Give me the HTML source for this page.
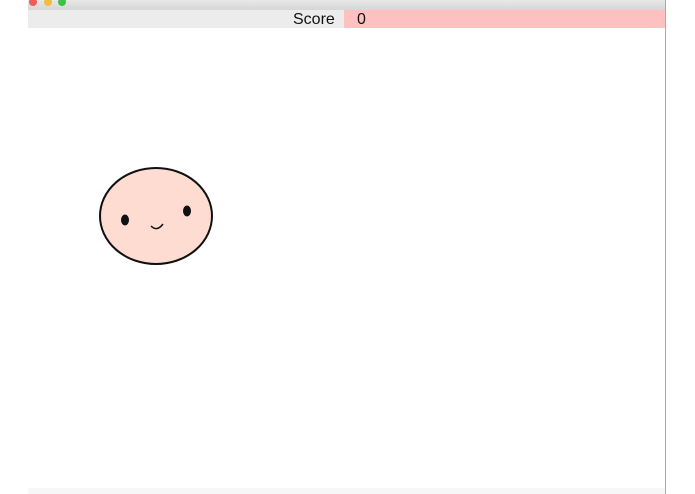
<!DOCTYPE html>
<html><head><style>
body{margin:0;width:695px;height:494px;background:#fff;position:relative;overflow:hidden;font-family:"Liberation Sans",sans-serif}
.tb{position:absolute;left:28px;top:0;width:637px;height:10px;background:linear-gradient(#e8e8e8,#d6d6d6)}
.bar{position:absolute;left:28px;top:10px;width:316px;height:18px;background:#ececec}
.pk{position:absolute;left:344px;top:10px;width:321px;height:18px;background:#ffc0c0}
.vl{position:absolute;left:665px;top:0;width:1px;height:494px;background:#aaa}
.t{position:absolute;top:10px;font-size:16px;line-height:19px;color:#111}
.dot{position:absolute;top:-2px;width:8px;height:8px;border-radius:50%}
</style></head><body>
<div class="tb"></div>
<div class="dot" style="left:29px;background:#f25a55"></div>
<div class="dot" style="left:44px;background:#f3bc3c"></div>
<div class="dot" style="left:58px;background:#3cc245"></div>
<div class="bar"></div><div class="pk"></div><div class="vl"></div>
<div class="t" style="left:293px">Score</div>
<div class="t" style="left:357px">0</div>
<div style="position:absolute;left:28px;top:488px;width:637px;height:6px;background:#f7f7f7"></div>
<svg style="position:absolute;left:0;top:0" width="695" height="494">
<ellipse cx="156" cy="216" rx="56" ry="48" fill="#fedcd2" stroke="#111" stroke-width="2"/>
<ellipse cx="125" cy="220" rx="4" ry="5.5" fill="#111"/>
<ellipse cx="187" cy="211" rx="4" ry="5.5" fill="#111"/>
<path d="M151 226 Q157 232 163 224" fill="none" stroke="#111" stroke-width="1.5"/>
</svg>
</body></html>
